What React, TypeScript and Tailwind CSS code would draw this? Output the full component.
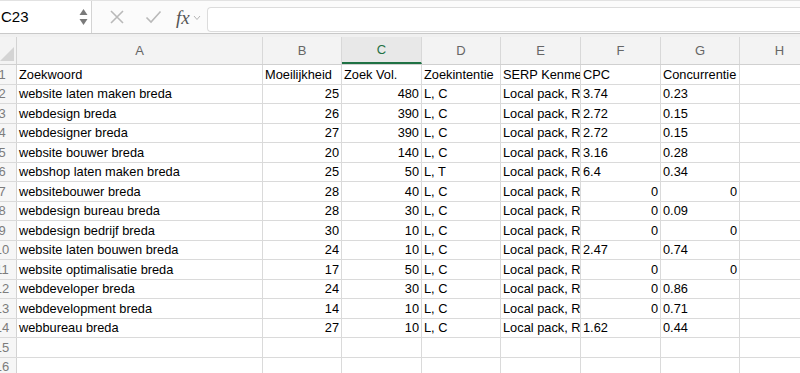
import React from "react";

const cols = [
  { key: "A", w: "w-[246px]" },
  { key: "B", w: "w-[79px]" },
  { key: "C", w: "w-[80px]" },
  { key: "D", w: "w-[79px]" },
  { key: "E", w: "w-[80px]" },
  { key: "F", w: "w-[80px]" },
  { key: "G", w: "w-[79px]" },
  { key: "H", w: "w-[80px]" },
];

type Cell = { t: string; r?: boolean } | null;

const L = (t: string): Cell => ({ t });
const R = (t: string): Cell => ({ t, r: true });

const lp = "Local pack, Reviews";

const rows: Cell[][] = [
  [L("Zoekwoord"), L("Moeilijkheid"), L("Zoek Vol."), L("Zoekintentie"), L("SERP Kenmerken"), L("CPC"), L("Concurrentie"), null],
  [L("website laten maken breda"), R("25"), R("480"), L("L, C"), L(lp), L("3.74"), L("0.23"), null],
  [L("webdesign breda"), R("26"), R("390"), L("L, C"), L(lp), L("2.72"), L("0.15"), null],
  [L("webdesigner breda"), R("27"), R("390"), L("L, C"), L(lp), L("2.72"), L("0.15"), null],
  [L("website bouwer breda"), R("20"), R("140"), L("L, C"), L(lp), L("3.16"), L("0.28"), null],
  [L("webshop laten maken breda"), R("25"), R("50"), L("L, T"), L(lp), L("6.4"), L("0.34"), null],
  [L("websitebouwer breda"), R("28"), R("40"), L("L, C"), L(lp), R("0"), R("0"), null],
  [L("webdesign bureau breda"), R("28"), R("30"), L("L, C"), L(lp), R("0"), L("0.09"), null],
  [L("webdesign bedrijf breda"), R("30"), R("10"), L("L, C"), L(lp), R("0"), R("0"), null],
  [L("website laten bouwen breda"), R("24"), R("10"), L("L, C"), L(lp), L("2.47"), L("0.74"), null],
  [L("website optimalisatie breda"), R("17"), R("50"), L("L, C"), L(lp), R("0"), R("0"), null],
  [L("webdeveloper breda"), R("24"), R("30"), L("L, C"), L(lp), R("0"), L("0.86"), null],
  [L("webdevelopment breda"), R("14"), R("10"), L("L, C"), L(lp), R("0"), L("0.71"), null],
  [L("webbureau breda"), R("27"), R("10"), L("L, C"), L(lp), L("1.62"), L("0.44"), null],
  [null, null, null, null, null, null, null, null],
  [null, null, null, null, null, null, null, null],
];

function FormulaBar() {
  return (
    <div className="flex h-[33px] items-stretch border-t border-[#e2e2e2] bg-[#fbfbfb]">
      <div className="flex w-[92px] items-center justify-between border-r border-[#d4d4d4] bg-white pr-[3px]">
        <span className="pl-[1px] text-[15px] text-black">C23</span>
        <svg width="9" height="18" viewBox="0 0 9 18">
          <path d="M4.5 1 L8.5 7 L0.5 7 Z" fill="#7a7a7a" />
          <path d="M4.5 17 L8.5 11 L0.5 11 Z" fill="#7a7a7a" />
        </svg>
      </div>
      <div className="flex items-center gap-0 pl-[17px]">
        <svg width="16" height="16" viewBox="0 0 16 16" className="mr-[20px]">
          <path d="M2 2 L14 14 M14 2 L2 14" stroke="#b9b9b9" strokeWidth="1.6" fill="none" />
        </svg>
        <svg width="17" height="14" viewBox="0 0 17 14" className="mr-[14px]">
          <path d="M1.5 7.5 L6 12 L15.5 1.5" stroke="#b9b9b9" strokeWidth="1.6" fill="none" />
        </svg>
        <span className="text-[19px] italic leading-none text-[#555]" style={{ fontFamily: "'Liberation Serif', serif" }}>
          fx
        </span>
        <svg width="8" height="6" viewBox="0 0 8 6" className="ml-[3px] mt-[2px]">
          <path d="M1 1 L4 4.5 L7 1" stroke="#b5b5b5" strokeWidth="1" fill="none" />
        </svg>
      </div>
      <div className="ml-[6px] mt-[6px] h-[25px] flex-1 rounded-l-[4px] border border-r-0 border-[#dcdcdc] bg-white" />
    </div>
  );
}

function HeaderRow() {
  return (
    <div className="flex h-[28px] border-b border-[#d0d0d0] bg-[#f3f3f3]">
      <div className="relative w-[17px] shrink-0 border-r border-[#d3d3d3]">
        <svg width="14" height="14" viewBox="0 0 14 14" className="absolute bottom-[3px] right-[2px]">
          <path d="M14 0 L14 14 L0 14 Z" fill="#d4d4d4" />
        </svg>
      </div>
      {cols.map((c) => (
        <div
          key={c.key}
          className={`${c.w} flex shrink-0 items-center justify-center border-r border-[#d8d8d8] text-[13px] ${
            c.key === "C" ? "border-b-2 border-b-[#1f7244] bg-[#e8e8e8] text-[#1f7244]" : "text-[#666]"
          }`}
        >
          {c.key}
        </div>
      ))}
    </div>
  );
}

export default function App() {
  return (
    <div
      className="h-[373px] w-[800px] overflow-hidden bg-white text-black"
      style={{ fontFamily: "'Liberation Sans', Arial, sans-serif" }}
    >
      <FormulaBar />
      <div className="h-[4px] border-t border-[#c9c9c9] bg-[#f0f0f0]" />
      <HeaderRow />
      <div className="flex flex-col">
        {rows.map((row, i) => (
          <div key={i} className="flex h-[19.5px] border-b border-[#dadada]">
            <div className="w-[17px] shrink-0 overflow-hidden border-r border-[#d3d3d3] bg-[#f6f6f6]">
              <div className="ml-[-14px] flex h-full w-[32px] items-center justify-center text-[13px] text-[#7c7c7c]">
                {i + 1}
              </div>
            </div>
            {cols.map((c, j) => {
              const cell = row[j];
              return (
                <div
                  key={c.key}
                  className={`${c.w} flex shrink-0 items-center overflow-hidden whitespace-nowrap border-r border-[#dadada] px-[2px] text-[12.8px] ${
                    cell?.r ? "justify-end" : "justify-start"
                  }`}
                >
                  {cell ? cell.t : ""}
                </div>
              );
            })}
          </div>
        ))}
      </div>
    </div>
  );
}
